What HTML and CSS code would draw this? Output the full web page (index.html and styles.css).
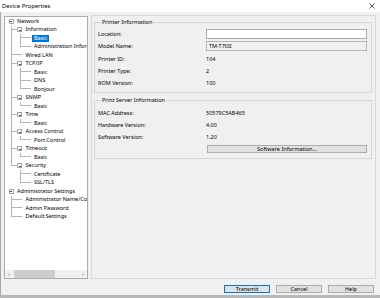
FILE: index.html
```html
<!DOCTYPE html>
<html lang="en">
<head>
    <meta charset="UTF-8">
    <title>Device Properties</title>
    <link rel="stylesheet" href="styles.css">
</head>
<body>

<div class="titlebar">
    <span class="title">Device Properties</span>
    <svg class="close" width="6" height="6" viewBox="0 0 6 6"><path d="M0.5 0.5L5.5 5.5M5.5 0.5L0.5 5.5" stroke="#333" stroke-width="0.8"/></svg>
</div>

<div class="window">
    <div class="main">
        <!-- Settings tree -->
        <div class="treebox">
            <ul class="tree">
                <li class="open">
                    <div class="row"><span class="exp"></span><span class="label">Network</span></div>
                    <ul>
                        <li class="open">
                            <div class="row"><span class="exp"></span><span class="label">Information</span></div>
                            <ul>
                                <li class="leaf"><div class="row"><span class="noexp"></span><span class="label selected">Basic</span></div></li>
                                <li class="leaf"><div class="row"><span class="noexp"></span><span class="label">Administration Information</span></div></li>
                            </ul>
                        </li>
                        <li class="leaf"><div class="row"><span class="noexp"></span><span class="label">Wired LAN</span></div></li>
                        <li class="open">
                            <div class="row"><span class="exp"></span><span class="label">TCP/IP</span></div>
                            <ul>
                                <li class="leaf"><div class="row"><span class="noexp"></span><span class="label">Basic</span></div></li>
                                <li class="leaf"><div class="row"><span class="noexp"></span><span class="label">DNS</span></div></li>
                                <li class="leaf"><div class="row"><span class="noexp"></span><span class="label">Bonjour</span></div></li>
                            </ul>
                        </li>
                        <li class="open">
                            <div class="row"><span class="exp"></span><span class="label">SNMP</span></div>
                            <ul>
                                <li class="leaf"><div class="row"><span class="noexp"></span><span class="label">Basic</span></div></li>
                            </ul>
                        </li>
                        <li class="open">
                            <div class="row"><span class="exp"></span><span class="label">Time</span></div>
                            <ul>
                                <li class="leaf"><div class="row"><span class="noexp"></span><span class="label">Basic</span></div></li>
                            </ul>
                        </li>
                        <li class="open">
                            <div class="row"><span class="exp"></span><span class="label">Access Control</span></div>
                            <ul>
                                <li class="leaf"><div class="row"><span class="noexp"></span><span class="label">Port Control</span></div></li>
                            </ul>
                        </li>
                        <li class="open">
                            <div class="row"><span class="exp"></span><span class="label">Timeout</span></div>
                            <ul>
                                <li class="leaf"><div class="row"><span class="noexp"></span><span class="label">Basic</span></div></li>
                            </ul>
                        </li>
                        <li class="open">
                            <div class="row"><span class="exp"></span><span class="label">Security</span></div>
                            <ul>
                                <li class="leaf"><div class="row"><span class="noexp"></span><span class="label">Certificate</span></div></li>
                                <li class="leaf"><div class="row"><span class="noexp"></span><span class="label">SSL/TLS</span></div></li>
                            </ul>
                        </li>
                    </ul>
                </li>
                <li class="open">
                    <div class="row"><span class="exp"></span><span class="label">Administrator Settings</span></div>
                    <ul>
                        <li class="leaf"><div class="row"><span class="noexp"></span><span class="label">Administrator Name/Contact Information</span></div></li>
                        <li class="leaf"><div class="row"><span class="noexp"></span><span class="label">Admin Password</span></div></li>
                        <li class="leaf"><div class="row"><span class="noexp"></span><span class="label">Default Settings</span></div></li>
                    </ul>
                </li>
            </ul>
            <div class="hscroll">
                <span class="arrow">&lsaquo;</span>
                <div class="track"><div class="thumb"></div></div>
                <span class="arrow">&rsaquo;</span>
            </div>
        </div>

        <!-- Property page -->
        <div class="panel">
            <fieldset class="group">
                <legend>Printer Information</legend>
                <div class="fields">
                    <span>Location:</span><input type="text" class="edit">
                    <span>Model Name:</span><input type="text" class="edit readonly" value="TM-T70II" readonly>
                    <span>Printer ID:</span><span>104</span>
                    <span>Printer Type:</span><span>2</span>
                    <span>ROM Version:</span><span>100</span>
                </div>
            </fieldset>
            <fieldset class="group server">
                <legend>Print Server Information</legend>
                <div class="fields">
                    <span>MAC Address:</span><span>50579C5AB465</span>
                    <span>Hardware Version:</span><span>4.00</span>
                    <span>Software Version:</span><span>1.20</span>
                </div>
                <button class="btn wide">Software Information...</button>
            </fieldset>
        </div>
    </div>

    <div class="buttons">
        <button class="btn default">Transmit</button>
        <button class="btn">Cancel</button>
        <button class="btn">Help</button>
    </div>
</div>

</body>
</html>
```

FILE: styles.css
```css
body {
    margin: 0;
    width: 380px;
    height: 298px;
    overflow: hidden;
    background-color: #f0f0f0;
    font-family: "Noto Sans", sans-serif;
    font-size: 5.5px;
    color: #000;
}
.titlebar {
    height: 12px;
    background-color: #fff;
    display: flex;
    align-items: center;
    justify-content: space-between;
    padding: 0 5px 0 2px;
}
.title {
    font-size: 5.9px;
}
.window {
    border-left: 1px solid #a8a8a8;
    border-bottom: 3px solid #b8b8b8;
    padding: 3px 4px 0 3px;
    box-sizing: border-box;
    height: 286px;
}
.main {
    display: flex;
    gap: 3px;
    height: 264px;
}

/* tree */
.treebox {
    width: 84px;
    margin-top: 1px;
    background-color: #fff;
    border: 1px solid #acacac;
    box-sizing: border-box;
    display: flex;
    flex-direction: column;
    overflow: hidden;
}
.tree, .tree ul {
    list-style: none;
    margin: 0;
    padding: 0;
}
.tree {
    flex: 1;
    padding-left: 3.5px;
    white-space: nowrap;
}
.tree ul {
    padding-left: 8.5px;
}
.tree li {
    position: relative;
}
.row {
    height: 8.5px;
    display: flex;
    align-items: center;
    overflow: hidden;
}
.exp {
    width: 5px;
    height: 5px;
    border: 1px solid #a6a6a6;
    box-sizing: border-box;
    background-color: #fff;
    position: relative;
    z-index: 1;
    flex-shrink: 0;
}
.exp::after {
    content: "";
    position: absolute;
    left: 0.5px;
    right: 0.5px;
    top: 1.5px;
    height: 0.7px;
    background-color: #444;
}
.noexp {
    width: 5px;
    flex-shrink: 0;
}
.label {
    margin-left: 1.5px;
    padding: 0 2px;
    line-height: 7.5px;
    min-width: 0;
    overflow: hidden;
}
.selected {
    background-color: #0078d7;
    color: #fff;
}
.tree ul > li::before {
    content: "";
    position: absolute;
    left: -6px;
    top: 0;
    width: 6px;
    height: 4.25px;
    border-left: 1px solid #b4b4b4;
    border-bottom: 1px solid #b4b4b4;
    box-sizing: border-box;
}
.tree ul > li.leaf::before {
    width: 11px;
}
.tree ul > li::after {
    content: "";
    position: absolute;
    left: -6px;
    top: 0;
    bottom: 0;
    border-left: 1px solid #b4b4b4;
}
.tree ul > li:last-child::after {
    display: none;
}
.hscroll {
    height: 8px;
    display: flex;
    align-items: center;
    background-color: #f0f0f0;
    flex-shrink: 0;
}
.arrow {
    width: 8px;
    text-align: center;
    font-size: 6px;
    color: #606060;
    line-height: 8px;
}
.track {
    flex: 1;
    height: 100%;
}
.thumb {
    width: 41px;
    height: 100%;
    margin-left: 1px;
    background-color: #cdcdcd;
}

/* property page */
.panel {
    flex: 1;
    border: 1px solid #d9d9d9;
    box-sizing: border-box;
    padding: 2.5px 3px 0 2px;
}
.group {
    margin: 0;
    padding: 2.4px 4px 3px 3px;
    border: 1px solid #d5d5d5;
    min-width: 0;
}
.group legend {
    margin-left: 3px;
    padding: 0 1px;
    line-height: 7px;
}
.server {
    margin-top: 3.5px;
    padding-top: 3.2px;
    padding-bottom: 5px;
}
.fields {
    display: grid;
    grid-template-columns: 108px 1fr;
    grid-auto-rows: 12.3px;
    align-items: center;
}
.server .fields {
    grid-auto-rows: 12px;
}
.edit {
    font: inherit;
    color: inherit;
    height: 10px;
    margin: 0;
    padding: 0 2px;
    border: 1px solid #a9a9a9;
    background-color: #fff;
    box-sizing: border-box;
    outline: none;
}
.readonly {
    background-color: #f0f0f0;
    border-color: #b4b4b4;
}
.btn {
    font: inherit;
    color: inherit;
    height: 8px;
    padding: 0;
    background-color: #e1e1e1;
    border: 1px solid #adadad;
    box-sizing: border-box;
    line-height: 6px;
}
.wide {
    display: block;
    width: 160px;
    margin: 2.3px 0 0 109px;
}
.buttons {
    display: flex;
    justify-content: flex-end;
    gap: 6px;
    margin: 6px 2px 0 0;
}
.buttons .btn {
    width: 46px;
}
.default {
    border-color: #0078d7;
}
```
